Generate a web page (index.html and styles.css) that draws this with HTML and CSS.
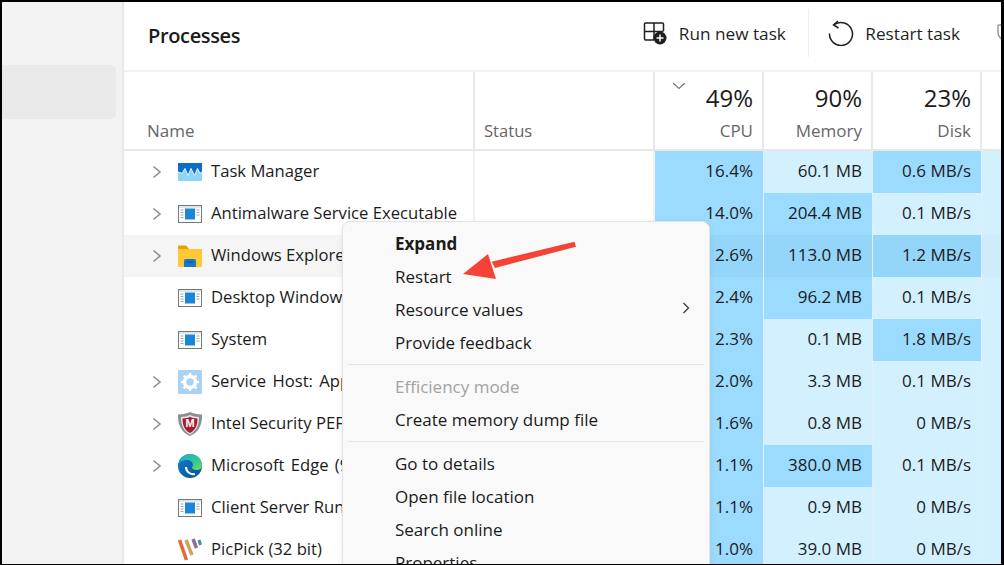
FILE: index.html
```html
<!DOCTYPE html>
<html lang="en">
<head>
<meta charset="utf-8">
<title>Task Manager</title>
<link rel="stylesheet" href="styles.css">
</head>
<body>
<svg class="defs" width="0" height="0" aria-hidden="true">
  <symbol id="app" viewBox="0 0 24 18">
    <rect x=".5" y=".5" width="23" height="17" fill="#fff" stroke="#6f7a80"/>
    <rect x="1" y="1" width="22" height="2" fill="#e3e6e8"/>
    <rect x="7" y="3.500" width="10" height="11" fill="#1a86d8"/>
    <path d="M2.500 5h3M2.500 7.500h3M2.500 10h3M2.500 12.500h3M18.500 5h3M18.500 7.500h3M18.500 10h3" stroke="#9aa5ab" fill="none"/>
  </symbol>
  <symbol id="chev" viewBox="0 0 10 14">
    <path d="M1.500 1.500 8 7l-6.500 5.500" fill="none" stroke="#8b8b8b" stroke-width="1.500"/>
  </symbol>
  <linearGradient id="edgeA" x1="0" y1="0" x2="1" y2="1">
    <stop offset="0" stop-color="#1fa6d8"/><stop offset=".6" stop-color="#36c98a"/><stop offset="1" stop-color="#6fdc5f"/>
  </linearGradient>
  <linearGradient id="edgeB" x1="0" y1="0" x2="1" y2="1">
    <stop offset="0" stop-color="#0f7fd0"/><stop offset="1" stop-color="#0a4f96"/>
  </linearGradient>
</svg>

<div class="window">
  <aside class="sidebar">
    <div class="nav-active"></div>
  </aside>
  <main class="main">
    <header class="toolbar">
      <h1 class="title">Processes</h1>
      <div class="actions">
        <button class="action">
          <svg class="ico-run" viewBox="0 0 24 24" width="24" height="24">
            <path d="M1.500 14.500V3a1 1 0 0 1 1-1h17a1 1 0 0 1 1 1v7M1.500 10.500h19M11 2v17M1.500 10.500V18a1 1 0 0 0 1 1h8.500" fill="none" stroke="#1f1f1f" stroke-width="1.500"/>
            <circle cx="17" cy="17" r="6.500" fill="#1f1f1f"/>
            <path d="M17 13.500v7M13.500 17h7" stroke="#fff" stroke-width="1.500"/>
          </svg>
          <span>Run new task</span>
        </button>
        <span class="tb-sep"></span>
        <button class="action action-restart">
          <svg class="ico-restart" viewBox="0 0 26 26" width="26" height="26">
            <path d="M6.500 4.500A11.500 11.500 0 1 1 1.500 13.500" fill="none" stroke="#1f1f1f" stroke-width="1.500"/>
            <path d="M10 1 5.500 4.800 10.500 8" fill="none" stroke="#1f1f1f" stroke-width="1.500"/>
          </svg>
          <span>Restart task</span>
        </button>
        <svg class="ico-eff" viewBox="0 0 12 24" width="12" height="24">
          <path d="M1 4h10v9M1 4v8c0 3 2 5 5 7" fill="none" stroke="#9a9a9a" stroke-width="1.500"/>
        </svg>
      </div>
    </header>

    <div class="table">
      <div class="row head">
        <div class="hcell name-h"><span class="hlabel">Name</span></div>
        <div class="hcell status-h"><span class="hlabel">Status</span></div>
        <div class="hcell num-h">
          <svg class="sort" viewBox="0 0 14 8" width="14" height="8"><path d="M1 1l6 5.500L13 1" fill="none" stroke="#777" stroke-width="1.200"/></svg>
          <span class="pct">49%</span><span class="hlabel">CPU</span>
        </div>
        <div class="hcell num-h"><span class="pct">90%</span><span class="hlabel">Memory</span></div>
        <div class="hcell num-h"><span class="pct">23%</span><span class="hlabel">Disk</span></div>
        <div class="hcell"></div>
      </div>

      <div class="row">
        <div class="name"><svg class="chev"><use href="#chev"/></svg>
          <svg class="pic" viewBox="0 0 24 18" width="24" height="18">
            <rect width="24" height="18" rx="1" fill="#8fd3f5"/>
            <path d="M0 0h24v8.500l-2 1.500-2.500-5-3 7-3.500-7-3 7-3-7-3 5-4-1.500z" fill="#0f6cc4"/>
            <path d="M0 9l4 1.500 3-5 3 7 3-7 3.500 7 3-7 2.500 5 2-1.500" fill="none" stroke="#d8f2ff" stroke-width="1"/>
          </svg>
          <span class="pname">Task Manager</span></div>
        <div class="status"></div>
        <div class="c hi">16.4%</div><div class="c lo">60.1 MB</div><div class="c hi">0.6 MB/s</div><div class="c lo end"></div>
      </div>
      <div class="row">
        <div class="name"><svg class="chev"><use href="#chev"/></svg>
          <svg class="pic" width="24" height="18"><use href="#app"/></svg>
          <span class="pname">Antimalware Service Executable</span></div>
        <div class="status"></div>
        <div class="c hi">14.0%</div><div class="c hi">204.4 MB</div><div class="c lo">0.1 MB/s</div><div class="c lo end"></div>
      </div>
      <div class="row hover">
        <div class="name"><svg class="chev"><use href="#chev"/></svg>
          <svg class="pic" viewBox="0 0 24 22" width="24" height="22">
            <path d="M0 2a1 1 0 0 1 1-1h7l3 3h13v17a1 1 0 0 1-1 1H1a1 1 0 0 1-1-1z" fill="#ffc933"/>
            <path d="M0 1.500a1 1 0 0 1 1-1h7l3 3.500H0z" fill="#e8a200"/>
            <path d="M6 22v-6a2 2 0 0 1 2-2h8a2 2 0 0 1 2 2v6z" fill="#1878c8"/>
            <path d="M9 17h6" stroke="#0c4f90" stroke-width="1"/>
          </svg>
          <span class="pname">Windows Explorer</span></div>
        <div class="status"></div>
        <div class="c hi">2.6%</div><div class="c hi">113.0 MB</div><div class="c hi">1.2 MB/s</div><div class="c lo end"></div>
      </div>
      <div class="row">
        <div class="name"><span class="chev-gap"></span>
          <svg class="pic" width="24" height="18"><use href="#app"/></svg>
          <span class="pname">Desktop Window Manager</span></div>
        <div class="status"></div>
        <div class="c hi">2.4%</div><div class="c hi">96.2 MB</div><div class="c lo">0.1 MB/s</div><div class="c lo end"></div>
      </div>
      <div class="row">
        <div class="name"><span class="chev-gap"></span>
          <svg class="pic" width="24" height="18"><use href="#app"/></svg>
          <span class="pname">System</span></div>
        <div class="status"></div>
        <div class="c hi">2.3%</div><div class="c lo">0.1 MB</div><div class="c hi">1.8 MB/s</div><div class="c lo end"></div>
      </div>
      <div class="row">
        <div class="name"><svg class="chev"><use href="#chev"/></svg>
          <svg class="pic" viewBox="0 0 24 24" width="24" height="24">
            <rect width="24" height="24" rx="1" fill="#a9d2f3"/>
            <circle cx="12" cy="12" r="5.500" fill="none" stroke="#fff" stroke-width="3.500"/>
            <path d="M12 3v3.500M12 17.500V21M3 12h3.500M17.500 12H21M5.600 5.600l2.500 2.500M15.900 15.900l2.500 2.500M5.600 18.400l2.500-2.500M15.900 8.100l2.500-2.500" stroke="#fff" stroke-width="2.500"/>
          </svg>
          <span class="pname wide">Service Host: Application Information</span></div>
        <div class="status"></div>
        <div class="c hi">2.0%</div><div class="c lo">3.3 MB</div><div class="c lo">0.1 MB/s</div><div class="c lo end"></div>
      </div>
      <div class="row">
        <div class="name"><svg class="chev"><use href="#chev"/></svg>
          <svg class="pic" viewBox="0 0 24 24" width="24" height="24">
            <path d="M0 2.500c5 0 8.500-1 12-2.500 3.500 1.500 7 2.500 12 2.500.5 9.500-3 17.500-12 21.500C3 20 -.5 12 0 2.500z" fill="#8f8f8f"/>
            <path d="M3 5c4 0 6.500-.7 9-2 2.500 1.300 5 2 9 2 .2 7.500-2.500 14-9 17.500C5.500 19 2.800 12.500 3 5z" fill="#e8e8e8"/>
            <path d="M4.500 6.500c3.500 0 5.500-.7 7.500-1.700 2 1 4 1.700 7.500 1.700 0 6.500-2 12-7.500 14.500C6.500 18.500 4.500 13 4.500 6.500z" fill="#a81c33"/>
            <text class="shield-m" x="12" y="15" text-anchor="middle">M</text>
          </svg>
          <span class="pname">Intel Security PEF Service</span></div>
        <div class="status"></div>
        <div class="c hi">1.6%</div><div class="c lo">0.8 MB</div><div class="c lo">0 MB/s</div><div class="c lo end"></div>
      </div>
      <div class="row">
        <div class="name"><svg class="chev"><use href="#chev"/></svg>
          <svg class="pic" viewBox="0 0 24 24" width="24" height="24">
            <circle cx="12" cy="12" r="12" fill="url(#edgeB)"/>
            <path d="M1 9C3 3 8 0 12 0c7 0 12 5 12 11 0 3-2 5-5.500 5-2.500 0-4.500-1-4.500-2.500 0-1 1-1.500 1-3 0-2.500-3-4.500-6-4.500C5 6 2.500 7 1 9z" fill="url(#edgeA)"/>
            <path d="M8 13c0 5 5 8 9 7" fill="none" stroke="#fff" stroke-width="2"/>
          </svg>
          <span class="pname wide">Microsoft Edge (9)</span></div>
        <div class="status"></div>
        <div class="c hi">1.1%</div><div class="c hi">380.0 MB</div><div class="c lo">0.1 MB/s</div><div class="c lo end"></div>
      </div>
      <div class="row">
        <div class="name"><span class="chev-gap"></span>
          <svg class="pic" width="24" height="18"><use href="#app"/></svg>
          <span class="pname">Client Server Runtime Process</span></div>
        <div class="status"></div>
        <div class="c hi">1.1%</div><div class="c lo">0.9 MB</div><div class="c lo">0 MB/s</div><div class="c lo end"></div>
      </div>
      <div class="row">
        <div class="name"><span class="chev-gap"></span>
          <svg class="pic" viewBox="0 0 24 24" width="24" height="24">
            <path d="M1.500 2l7 20" stroke="#e2683a" stroke-width="3.500"/>
            <path d="M8 2l6 15" stroke="#c9a46a" stroke-width="3.500"/>
            <path d="M15 1l3.500 9" stroke="#8b6f9a" stroke-width="3.500"/>
            <path d="M21 2l1.500 5" stroke="#4a8a9f" stroke-width="3"/>
          </svg>
          <span class="pname">PicPick (32 bit)</span></div>
        <div class="status"></div>
        <div class="c hi">1.0%</div><div class="c lo">39.0 MB</div><div class="c lo">0 MB/s</div><div class="c lo end"></div>
      </div>
    </div>
  </main>

  <div class="menu">
    <div class="mi strong">Expand</div>
    <div class="mi">Restart</div>
    <div class="mi">Resource values
      <svg class="mi-chev" viewBox="0 0 8 12" width="8" height="12"><path d="M1.500 1 6.500 6l-5 5" fill="none" stroke="#333" stroke-width="1.200"/></svg>
    </div>
    <div class="mi">Provide feedback</div>
    <div class="msep"></div>
    <div class="mi off">Efficiency mode</div>
    <div class="mi">Create memory dump file</div>
    <div class="msep"></div>
    <div class="mi">Go to details</div>
    <div class="mi">Open file location</div>
    <div class="mi">Search online</div>
    <div class="mi">Properties</div>
  </div>

  <svg class="arrow" viewBox="0 0 120 44" width="120" height="44">
    <path d="M112.500 1.700 114 6.700 33 28 29.700 21.700z" fill="#f44336"/>
    <path d="M1 34 26 14 34 39z" fill="#f44336"/>
  </svg>
</div>
</body>
</html>
```

FILE: styles.css
```css
* { box-sizing: border-box; }
html, body { margin: 0; height: 100%; overflow: hidden; background: #000; }
body { font-family: "Open Sans", "Noto Sans", sans-serif; color: #1b1b1b; padding: 2px 3px 1px 2px; }
.defs { position: absolute; }

.window {
  position: relative;
  display: flex;
  height: 562px;
  overflow: hidden;
  background: #fff;
}

.sidebar {
  width: 122px;
  flex: none;
  background: #f3f3f3;
  border-right: 2px solid #e8e8e8;
  padding-top: 63px;
}
.nav-active {
  width: 114px;
  height: 54px;
  background: #eaeaea;
  border-radius: 0 5px 5px 0;
}

.main { flex: 1; min-width: 0; display: flex; flex-direction: column; overflow: hidden; }

.toolbar {
  height: 70px;
  flex: none;
  display: flex;
  align-items: center;
  justify-content: space-between;
  border-bottom: 2px solid #f0f0f0;
  padding-left: 24px;
}
.title { margin: 0; font-size: 20px; font-weight: 600; color: #1b1b1b; letter-spacing: -.35px; position: relative; top: -1px; }
.actions { display: flex; align-items: center; height: 48px; margin-top: -6px; margin-right: -8px; flex: none; }
.action {
  display: flex;
  align-items: center;
  gap: 12px;
  border: 0;
  padding: 0;
  background: none;
  font: inherit;
  font-size: 17.200px;
  color: #1f1f1f;
}
.action-restart { gap: 11px; }
.tb-sep { width: 1.500px; height: 48px; background: #efefef; margin: 0 19px 0 22px; }
.ico-eff { margin-left: 37px; flex: none; }

.table { flex: 1; min-height: 0; }
.row {
  display: grid;
  grid-template-columns: 351px 180px 109px 109px 109px 1fr;
  height: 42px;
}
.row.head { height: 79px; border-bottom: 2px solid #e8e8e8; }

.hcell {
  position: relative;
  display: flex;
  flex-direction: column;
  justify-content: flex-end;
  align-items: flex-end;
  border-right: 2px solid #e8e8e8;
  padding: 0 9px 6px;
}
.name-h, .status-h { align-items: flex-start; }
.hcell:last-child { border-right: 0; }
.hlabel { font-size: 17px; line-height: 24px; color: #666; }
.status-h .hlabel { font-size: 16.600px; }
.pct { font-size: 24px; line-height: 30px; color: #1b1b1b; margin-bottom: 6px; }
.num-h { padding-right: 9px; }
.name-h { padding-left: 23px; }
.sort { position: absolute; top: 10px; left: 17px; }

.name {
  display: flex;
  align-items: center;
  padding-left: 28px;
  overflow: hidden;
  white-space: nowrap;
  border-right: 2px solid #f1f1f1;
}
.chev { width: 10px; height: 14px; flex: none; margin-right: 16px; }
.chev-gap { width: 10px; flex: none; margin-right: 16px; }
.pic { flex: none; margin-right: 9px; }
.pname { font-size: 16.650px; color: #1b1b1b; padding-bottom: 3px; }
.pname.wide { word-spacing: 2px; }
.status { border-right: 2px solid #f1f1f1; }
.hover .name, .hover .status { background: #f5f5f5; }

.c {
  display: flex;
  align-items: center;
  justify-content: flex-end;
  padding: 0 10px 3px 0;
  font-size: 17px;
  color: #1b1b1b;
  border-right: 1px solid #e4eef4;
}
.c.hi { background: #9bdbff; }
.c.lo { background: #d3f0ff; }
.c.end { border-right: 0; }
.hover .c.hi { background: #94d5fa; }
.hover .c.lo { background: #cfecfb; }

.shield-m { font-family: "Liberation Sans", sans-serif; font-size: 11px; font-weight: 700; fill: #fff; }

.menu {
  position: absolute;
  left: 340px;
  top: 219px;
  width: 368px;
  height: 360px;
  padding: 5px 5px;
  background: #f9f9f9;
  border: 1px solid #e3e3e3;
  border-radius: 8px;
  box-shadow: 0 2px 6px rgba(0,0,0,.08);
}
.mi {
  position: relative;
  height: 33px;
  line-height: 33px;
  padding-left: 47px;
  font-size: 17px;
  color: #1b1b1b;
  white-space: nowrap;
}
.mi.strong { font-weight: 700; }
.mi.off { color: #a3a3a3; }
.mi-chev { position: absolute; right: 14px; top: 9px; }
.msep { height: 1px; background: #e6e6e6; margin: 5px 0; }

.arrow { position: absolute; left: 460px; top: 238px; }
```
